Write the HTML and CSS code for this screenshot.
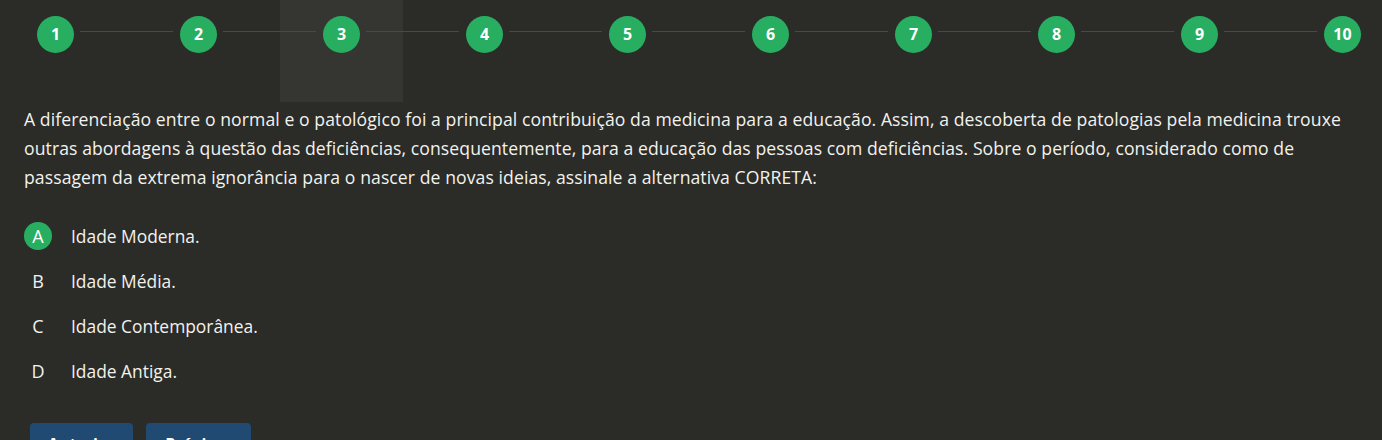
FILE: index.html
```html
<!DOCTYPE html>
<html lang="pt-BR">
<head>
<meta charset="utf-8">
<title>Questionário</title>
<link rel="stylesheet" href="styles.css">
</head>
<body>
<nav class="steps">
  <div class="step">1</div><div class="line"></div>
  <div class="step">2</div><div class="line"></div>
  <div class="step current">3</div><div class="line"></div>
  <div class="step">4</div><div class="line"></div>
  <div class="step">5</div><div class="line"></div>
  <div class="step">6</div><div class="line"></div>
  <div class="step">7</div><div class="line"></div>
  <div class="step">8</div><div class="line"></div>
  <div class="step">9</div><div class="line"></div>
  <div class="step">10</div>
</nav>
<main class="question">
  <p class="statement">A diferenciação entre o normal e o patológico foi a principal contribuição da medicina para a educação. Assim, a descoberta de patologias pela medicina trouxe outras abordagens à questão das deficiências, consequentemente, para a educação das pessoas com deficiências. Sobre o período, considerado como de passagem da extrema ignorância para o nascer de novas ideias, assinale a alternativa CORRETA:</p>
  <ul class="options">
    <li class="option selected"><span class="letter">A</span><span class="text">Idade Moderna.</span></li>
    <li class="option"><span class="letter">B</span><span class="text">Idade Média.</span></li>
    <li class="option"><span class="letter">C</span><span class="text">Idade Contemporânea.</span></li>
    <li class="option"><span class="letter">D</span><span class="text">Idade Antiga.</span></li>
  </ul>
  <div class="actions">
    <button class="btn btn-prev">Anterior</button>
    <button class="btn btn-next">Próxima</button>
  </div>
</main>
</body>
</html>
```
FILE: styles.css
```css
* { box-sizing: border-box; }
html, body {
  margin: 0;
  padding: 0;
  background: #2b2b27;
  color: #f2f2ee;
  font-family: "Open Sans", "Liberation Sans", sans-serif;
  overflow: hidden;
}
.steps {
  position: relative;
  z-index: 0;
  display: flex;
  align-items: flex-start;
  height: 102px;
  padding: 16px 21px 0 37px;
}
.step {
  position: relative;
  flex: 0 0 37px;
  width: 37px;
  height: 37px;
  border-radius: 50%;
  background: #27ae60;
  color: #fff;
  font-weight: 700;
  font-size: 16px;
  line-height: 37px;
  text-align: center;
}
.step.current::before {
  content: "";
  position: absolute;
  z-index: -1;
  left: -43px;
  top: -16px;
  width: 123px;
  height: 102px;
  background: #353531;
}
.line {
  flex: 1 1 auto;
  height: 1px;
  margin: 15px 7px 0 6px;
  background: #4a4a45;
}
.question {
  padding: 0 24px;
}
.statement {
  margin: 3px 0 0;
  font-size: 17.6px;
  line-height: 28.8px;
  letter-spacing: 0.08px;
}
.options {
  list-style: none;
  margin: 22px 0 0;
  padding: 0;
}
.option {
  display: flex;
  align-items: center;
  height: 45px;
  font-size: 17.4px;
}
.letter {
  flex: 0 0 28px;
  width: 28px;
  height: 28px;
  border-radius: 50%;
  line-height: 28px;
  text-align: center;
  margin-right: 19px;
  font-size: 18px;
}
.option.selected .letter {
  background: #27ae60;
  color: #fff;
}
.actions {
  display: flex;
  gap: 13px;
  margin: 30px 0 0 6px;
}
.btn {
  height: 42px;
  border: 0;
  border-radius: 4px;
  background: #204a72;
  color: #fff;
  font-family: inherit;
  font-weight: 700;
  font-size: 16px;
  padding: 0 17px;
}
.btn-prev { width: 103px; }
.btn-next { width: 105px; }
```
